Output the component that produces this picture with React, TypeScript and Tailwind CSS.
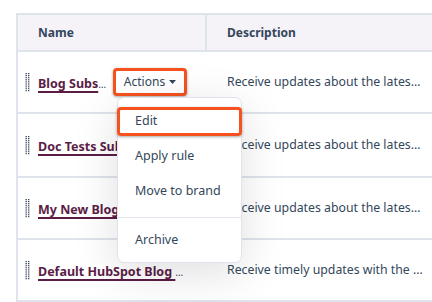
import React from "react";

const Handle = () => (
  <svg width="5" height="19" viewBox="0 0 5 19" className="shrink-0">
    {Array.from({ length: 10 }).map((_, i) => (
      <g key={i}>
        <rect x="0.5" y={i * 1.9} width="1.4" height="1.1" fill="#33475b" />
        <rect x="3" y={i * 1.9} width="1.4" height="1.1" fill="#33475b" />
      </g>
    ))}
  </svg>
);

const NameLink = ({ children }: { children: React.ReactNode }) => (
  <span className="text-[12.5px] font-bold text-[#5b1d46] underline decoration-[1.5px] underline-offset-[3px] whitespace-nowrap">
    {children}
  </span>
);

const Desc = ({ children }: { children: React.ReactNode }) => (
  <div className="flex-1 flex items-center pl-[18px] text-[12.3px] text-[#33475b] whitespace-nowrap">
    {children}
  </div>
);

export default function App() {
  const font = { fontFamily: '"Noto Sans", "Open Sans", Arial, sans-serif' };
  return (
    <div className="w-[432px] h-[302px] overflow-hidden bg-white relative" style={font}>
      <div className="pt-[13px] pl-[16px]">
        <div className="w-[440px] border-l-2 border-[#dfe3eb]">
          {/* header */}
          <div className="flex h-[39px] bg-[#f5f2f8] border-t-2 border-b-2 border-[#dfe3eb]">
            <div className="w-[189px] border-r-2 border-[#dfe3eb] flex items-center pl-[20px] text-[12px] font-bold text-[#33475b]">
              Name
            </div>
            <div className="flex-1 flex items-center pl-[20px] text-[12px] font-bold text-[#33475b]">
              Description
            </div>
          </div>
          {/* row 1 */}
          <div className="flex h-[62px] border-b-2 border-[#dfe3eb] relative z-10">
            <div className="w-[191px] flex items-center pl-[7px]">
              <Handle />
              <span className="ml-[8px] w-[75px] whitespace-nowrap">
                <NameLink>Blog Subs</NameLink>
                <span className="text-[10px] text-[#33475b]">…</span>
              </span>
              <div className="relative">
                <div className="w-[74px] h-[28px] rounded-[4px] border-[3px] border-[#f5521f] bg-white shadow-[0_1px_3px_rgba(0,0,0,0.35)] flex items-center justify-center gap-[4px] text-[12px] text-[#33475b]">
                  <span>Actions</span>
                  <svg width="7" height="4" viewBox="0 0 7 4">
                    <path d="M0 0 L7 0 L3.5 4 Z" fill="#33475b" />
                  </svg>
                </div>
                {/* dropdown */}
                <div className="absolute left-[4px] top-[29px] w-[125px] h-[166px] bg-white border border-[#dfe3eb] rounded-[7px] shadow-[0_10px_45px_rgba(0,0,0,0.13)] flex flex-col text-[12.5px] text-[#33475b]">
                  <div className="mt-[9px] mx-[-1px] h-[29px] rounded-[4px] border-[3px] border-[#f5521f] shadow-[0_1px_3px_rgba(0,0,0,0.35)] flex items-center pl-[15px]">
                    Edit
                  </div>
                  <div className="h-[35px] flex items-center pl-[17px] mt-[3px]">Apply rule</div>
                  <div className="h-[34px] flex items-center pl-[17px]">Move to brand</div>
                  <div className="h-px bg-[#dfe3eb] mt-[9px]" />
                  <div className="flex-1 flex items-center pl-[17px]">Archive</div>
                </div>
              </div>
            </div>
            <Desc>Receive updates about the lates…</Desc>
          </div>
          {/* row 2 */}
          <div className="flex h-[64px] border-b-2 border-[#dfe3eb]">
            <div className="w-[191px] flex items-center pl-[7px]">
              <Handle />
              <span className="ml-[8px]">
                <NameLink>Doc Tests Subscription</NameLink>
              </span>
            </div>
            <Desc>Receive updates about the lates…</Desc>
          </div>
          {/* row 3 */}
          <div className="flex h-[62px] border-b-2 border-[#dfe3eb]">
            <div className="w-[191px] flex items-center pl-[7px]">
              <Handle />
              <span className="ml-[8px]">
                <NameLink>My New Blog Subscription</NameLink>
              </span>
            </div>
            <Desc>Receive updates about the lates…</Desc>
          </div>
          {/* row 4 */}
          <div className="flex h-[62px] border-b-2 border-[#dfe3eb]">
            <div className="w-[191px] flex items-center pl-[7px]">
              <Handle />
              <span className="ml-[8px] whitespace-nowrap">
                <NameLink>Default HubSpot Blog </NameLink>
                <span className="text-[10px] text-[#33475b]">…</span>
              </span>
            </div>
            <Desc>Receive timely updates with the …</Desc>
          </div>
        </div>
      </div>
    </div>
  );
}
